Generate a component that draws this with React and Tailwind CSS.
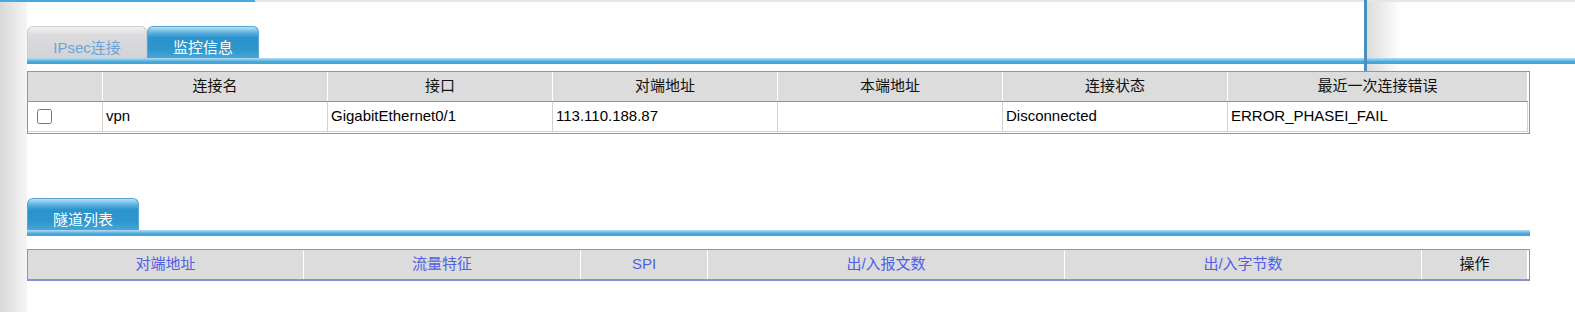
import React from "react";

const connCols = ["", "连接名", "接口", "对端地址", "本端地址", "连接状态", "最近一次连接错误"];
const connRow = ["vpn", "GigabitEthernet0/1", "113.110.188.87", "", "Disconnected", "ERROR_PHASEI_FAIL"];
const tunnelCols = ["对端地址", "流量特征", "SPI", "出/入报文数", "出/入字节数"];

const Tab = ({ label, active, width }) => (
  <div
    className={
      active
        ? `${width} h-[32px] rounded-t-[6px] border border-b-0 border-[#58a6d6] bg-[linear-gradient(to_bottom,#b9e0f4_0%,#5fb2e0_18%,#2b93cb_35%,#2d96cc_70%,#45a6d8_100%)] flex justify-center pt-[13px] text-white`
        : `${width} h-[32px] rounded-t-[6px] border border-b-0 border-[#cfcfd2] bg-[linear-gradient(to_bottom,#f2f2f2_0%,#dcdcdf_25%,#d2d3d6_100%)] flex justify-center pt-[13px] text-[#6aa4da]`
    }
  >
    <span className="leading-none">{label}</span>
  </div>
);

const BlueBar = ({ className = "" }) => (
  <div
    className={`h-[6px] bg-[linear-gradient(to_bottom,#b4dcf0_0%,#7cc2e6_35%,#47a9db_60%,#3fa4d8_100%)] relative z-10 ${className}`}
  />
);

export default function App() {
  return (
    <div className="relative w-[1575px] h-[312px] bg-white overflow-hidden font-['Liberation_Sans','Noto_Sans_CJK_SC',sans-serif] text-[15px]">
      {/* top strip */}
      <div className="flex h-[2px]">
        <div className="w-[255px] bg-[#4aa9dc]" />
        <div className="flex-1 bg-[#e6e6e6]" />
      </div>

      <div className="flex h-[310px]">
        <div className="w-[27px] bg-[linear-gradient(to_right,#d9d9d9,#f5f5f5)]" />

        <div className="flex-1 flex flex-col">
          {/* monitor tabs */}
          <div className="flex mt-[24px]">
            <Tab label="IPsec连接" width="w-[120px]" />
            <Tab label="监控信息" width="w-[112px]" active />
          </div>
          <BlueBar />

          {/* connection table */}
          <div className="mt-[7px] w-[1503px] border border-[#8a90cc] pr-px pb-px">
            <div className="grid grid-cols-[75px_225px_225px_225px_225px_225px_300px] h-[30px] bg-[#dcdcdc] border-b border-[#8a90cc]">
              {connCols.map((c, i) => (
                <div key={i} className="border-r border-white flex items-center justify-center text-[#111]">
                  {c}
                </div>
              ))}
            </div>
            <div className="grid grid-cols-[75px_225px_225px_225px_225px_225px_300px] h-[30px] border-b border-[#d2d2d2]">
              <div className="border-r border-[#d2d2d2] flex items-center">
                <input type="checkbox" className="ml-[9px] w-[15px] h-[15px]" />
              </div>
              {connRow.map((c, i) => (
                <div key={i} className="border-r border-[#d2d2d2] flex items-center pl-[3px] text-black">
                  {c}
                </div>
              ))}
            </div>
          </div>

          {/* tunnel list */}
          <div className="w-[1503px] mt-[64px]">
            <Tab label="隧道列表" width="w-[112px]" active />
            <BlueBar />
          </div>

          <div className="mt-[13px] w-[1503px] border border-b-2 border-[#8a90cc] pr-px">
            <div className="grid grid-cols-[276px_277px_127px_357px_357px_106px] h-[29px] bg-[#dcdcdc]">
              {tunnelCols.map((c) => (
                <div key={c} className="border-r border-white flex items-center justify-center text-[#5060e6]">
                  {c}
                </div>
              ))}
              <div className="border-r border-white flex items-center justify-center text-[#111]">操作</div>
            </div>
          </div>
        </div>
      </div>

      {/* side panel edge overlay */}
      <div className="absolute left-[1367px] top-[2px] w-[34px] h-[69px] bg-[linear-gradient(to_right,#dcdcdc,#ffffff)]" />
      <div className="absolute left-[1364px] top-0 w-[3px] h-[71px] bg-[#4a8fc2] z-20" />
    </div>
  );
}
